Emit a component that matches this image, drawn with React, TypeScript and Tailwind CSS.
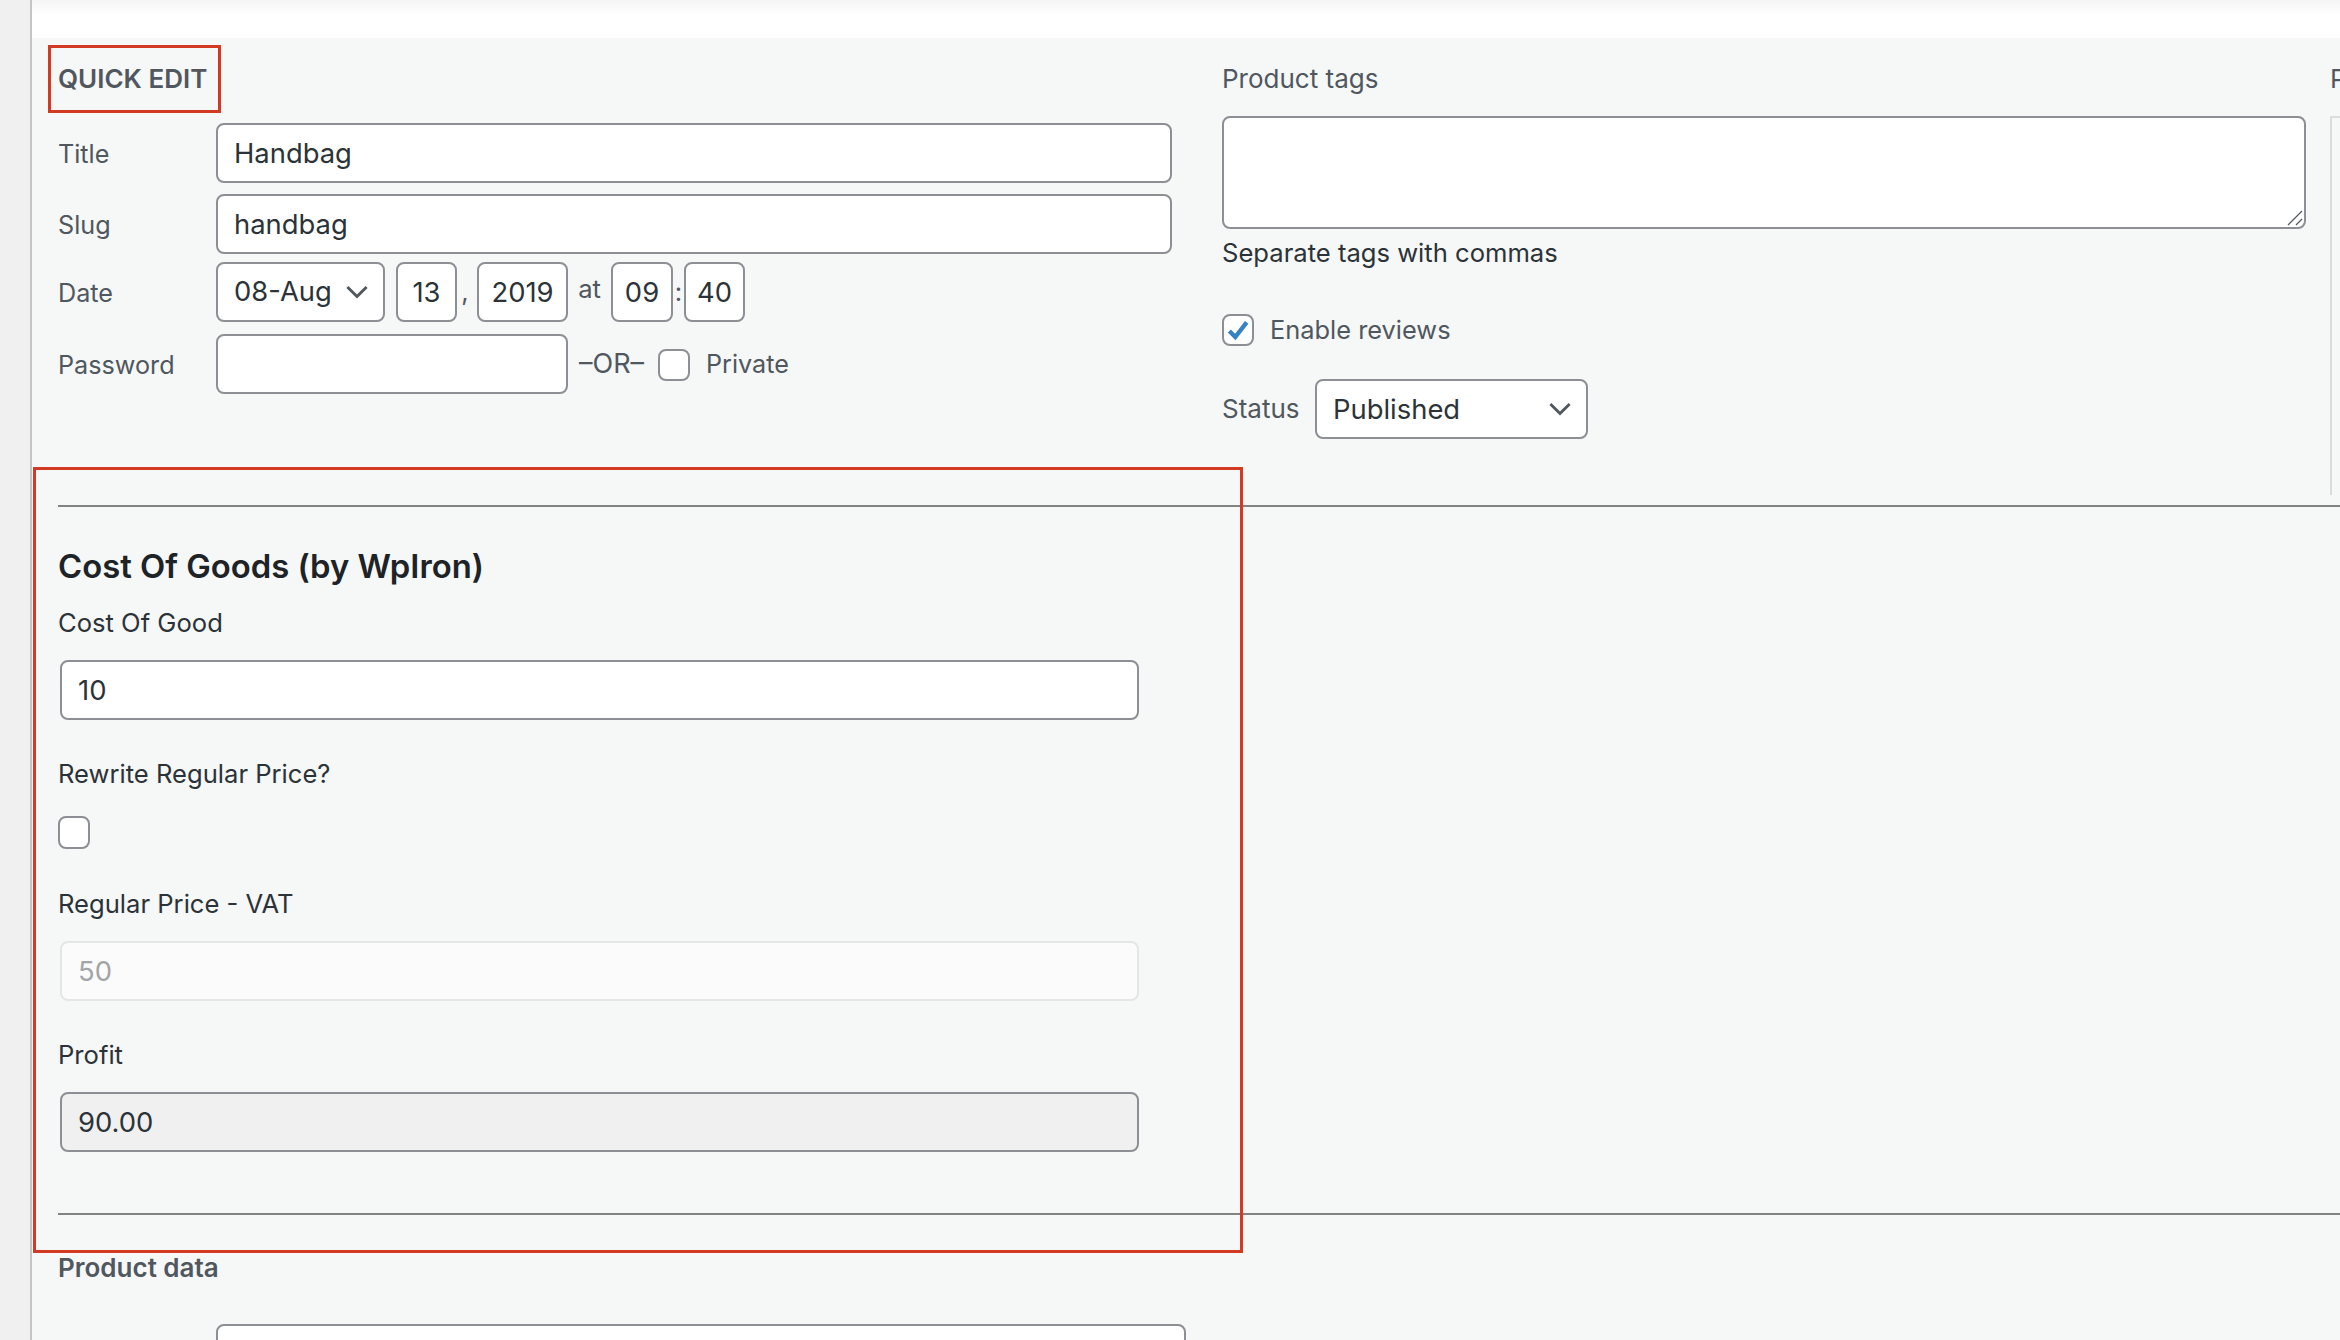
import type { ReactNode } from "react";

const inputBase =
  "h-[60px] rounded-lg border-2 border-[#8c8f94] bg-white px-[16px] text-[27.4px] text-[#2c3338] outline-none";

function Chevron() {
  return (
    <svg viewBox="0 0 20 20" className="w-[24px] h-[24px] shrink-0" fill="none" stroke="#50575e" strokeWidth={2.4}>
      <path d="M2 5.8l8 8 8-8" />
    </svg>
  );
}

function Row({ label, children, mt }: { label: string; children: ReactNode; mt: string }) {
  return (
    <div className={`flex items-center ${mt}`}>
      <span className="w-[158px] shrink-0 translate-y-[2px] text-[25.2px] text-[#50575e]">{label}</span>
      {children}
    </div>
  );
}

function FieldLabel({ children, className }: { children: ReactNode; className: string }) {
  return <div className={`h-[32px] leading-[32px] text-[25.6px] text-[#2c3338] ${className}`}>{children}</div>;
}

export default function App() {
  return (
    <div className="relative flex h-[1340px] w-[2340px] overflow-hidden bg-white font-['Inter',sans-serif]">
      <aside className="w-[32px] shrink-0 border-r-2 border-[#c3c4c7] bg-[#f0f0f1]" />
      <main className="flex min-w-0 flex-1 flex-col">
        <div className="h-[38px] shrink-0 bg-gradient-to-b from-[#f5f5f5] to-white to-40%" />
        <div className="flex flex-1 flex-col bg-[#f6f7f7]">
          <section className="flex h-[467px] shrink-0 pl-[26px]">
            <div className="w-[1114px] shrink-0">
              <div className="mt-[25px] h-[32px] text-[26px] font-semibold leading-[32px] text-[#50575e]">QUICK EDIT</div>
              <Row label="Title" mt="mt-[28px]">
                <input readOnly value="Handbag" className={`${inputBase} w-[956px]`} />
              </Row>
              <Row label="Slug" mt="mt-[11px]">
                <input readOnly value="handbag" className={`${inputBase} w-[956px]`} />
              </Row>
              <Row label="Date" mt="mt-[8px]">
                <div className={`${inputBase} flex w-[169px] items-center justify-between !pr-[14px]`}>
                  <span>08-Aug</span>
                  <Chevron />
                </div>
                <input readOnly value="13" className={`${inputBase} ml-[11px] w-[61px] !px-0 text-center`} />
                <span className="flex h-[60px] w-[20px] -translate-x-[2px] items-center justify-center text-[25.6px] text-[#50575e]">,</span>
                <input readOnly value="2019" className={`${inputBase} w-[91px] !px-0 text-center`} />
                <span className="w-[43px] -translate-y-[3px] text-center text-[25.6px] text-[#50575e]">at</span>
                <input readOnly value="09" className={`${inputBase} w-[62px] !px-0 text-center`} />
                <span className="w-[11px] text-center text-[25.6px] text-[#50575e]">:</span>
                <input readOnly value="40" className={`${inputBase} w-[61px] !px-0 text-center`} />
              </Row>
              <Row label="Password" mt="mt-[12px]">
                <input readOnly value="" className={`${inputBase} w-[352px]`} />
                <span className="ml-[11px] w-[67px] whitespace-nowrap text-[27px] text-[#50575e]">–OR–</span>
                <span className="ml-[12px] h-[32px] w-[32px] translate-y-[1px] rounded-lg border-2 border-[#8c8f94] bg-white" />
                <span className="ml-[16px] translate-y-[1px] text-[25.2px] text-[#50575e]">Private</span>
              </Row>
            </div>
            <div className="ml-[50px] w-[1084px] shrink-0">
              <div className="mt-[25px] h-[32px] text-[26px] leading-[32px] text-[#50575e]">Product tags</div>
              <div className="relative mt-[21px] h-[113px] rounded-lg border-2 border-[#8c8f94] bg-white">
                <svg viewBox="0 0 16 16" className="absolute bottom-[1px] right-[1px] h-[16px] w-[16px]" stroke="#50575e" strokeWidth={1.2}>
                  <path d="M1 15L15 1M9 15l6-6" />
                </svg>
              </div>
              <div className="mt-[8px] h-[32px] text-[25.6px] leading-[32px] text-[#2c3338]">Separate tags with commas</div>
              <div className="mt-[42px] flex items-center">
                <span className="flex h-[32px] w-[32px] items-center justify-center rounded-lg border-2 border-[#8c8f94] bg-white">
                  <svg viewBox="0 0 24 24" className="h-[26px] w-[26px]" fill="none" stroke="#3582c4" strokeWidth={4}>
                    <path d="M4 13l5.5 5.5L20 5" />
                  </svg>
                </span>
                <span className="ml-[16px] text-[25.4px] text-[#50575e]">Enable reviews</span>
              </div>
              <div className="mt-[30px] flex items-center">
                <span className="w-[93px] -translate-y-[1px] text-[26px] text-[#50575e]">Status</span>
                <div className={`${inputBase} flex w-[273px] items-center justify-between !pr-[14px]`}>
                  <span>Published</span>
                  <Chevron />
                </div>
              </div>
            </div>
            <div className="ml-[24px] w-[300px] shrink-0">
              <div className="mt-[25px] h-[32px] whitespace-nowrap text-[26px] leading-[32px] text-[#50575e]">Product categories</div>
              <div className="mt-[21px] h-[379px] border-l-2 border-t-2 border-[#dcdcde]" />
            </div>
          </section>
          <div className="ml-[26px] h-[2px] shrink-0 bg-[#828282]" />
          <section className="flex h-[706px] shrink-0 flex-col pl-[26px]">
            <h2 className="mt-[39px] h-[40px] text-[32.8px] font-semibold leading-[40px] text-[#1d2327]">Cost Of Goods (by WpIron)</h2>
            <FieldLabel className="mt-[21px]">Cost Of Good</FieldLabel>
            <input readOnly value="10" className={`${inputBase} ml-[2px] mt-[21px] w-[1079px] shrink-0`} />
            <FieldLabel className="mt-[38px]">Rewrite Regular Price?</FieldLabel>
            <span className="mt-[26px] h-[33px] w-[32px] rounded-lg border-2 border-[#8c8f94] bg-white" />
            <FieldLabel className="mt-[39px]">Regular Price - VAT</FieldLabel>
            <input readOnly disabled value="50" className="ml-[2px] mt-[21px] h-[60px] w-[1079px] shrink-0 rounded-lg border-2 border-[#e4e5e6] bg-[#fbfbfb] px-[16px] text-[27.4px] text-[#a2a5a7]" />
            <FieldLabel className="mt-[38px]">Profit</FieldLabel>
            <input readOnly value="90.00" className={`${inputBase} ml-[2px] mt-[21px] w-[1079px] shrink-0 !bg-[#f0f0f1]`} />
          </section>
          <div className="ml-[26px] h-[2px] shrink-0 bg-[#828282]" />
          <section className="pl-[26px]">
            <div className="mt-[37px] h-[32px] text-[26px] font-semibold leading-[32px] text-[#50575e]">Product data</div>
            <div className="ml-[158px] mt-[40px] h-[60px] w-[970px] rounded-lg border-2 border-[#8c8f94] bg-white" />
          </section>
        </div>
      </main>
      {/* red annotation boxes drawn over the screenshot */}
      <div className="absolute left-[48px] top-[45px] h-[68px] w-[173px] border-[3px] border-[#d23a22]" />
      <div className="absolute left-[33px] top-[467px] h-[786px] w-[1210px] border-[3px] border-[#d23a22]" />
    </div>
  );
}
